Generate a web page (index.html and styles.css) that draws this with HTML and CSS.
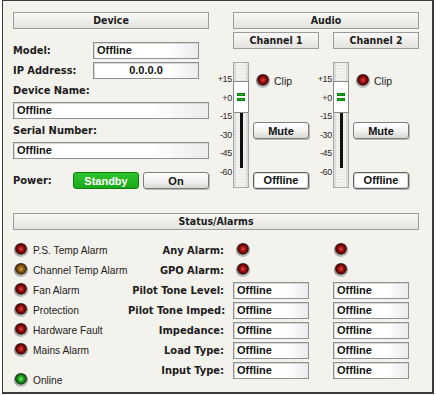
FILE: index.html
```html
<!DOCTYPE html>
<html lang="en">

<head>
    <meta charset="UTF-8">
    <title>Amplifier Status</title>
    <link rel="stylesheet" href="styles.css">
</head>

<body>
    <div class="frame">
        <div class="top">
            <section class="device">
                <div class="bar">Device</div>

                <div class="row first">
                    <span class="lbl">Model:</span>
                    <div class="field short">Offline</div>
                </div>
                <div class="row">
                    <span class="lbl">IP Address:</span>
                    <div class="field short center">0.0.0.0</div>
                </div>

                <div class="lbl line">Device Name:</div>
                <div class="field wide">Offline</div>

                <div class="lbl line">Serial Number:</div>
                <div class="field wide">Offline</div>

                <div class="row power">
                    <span class="lbl">Power:</span>
                    <button class="btn green">Standby</button>
                    <button class="btn">On</button>
                </div>
            </section>

            <section class="audio">
                <div class="bar">Audio</div>
                <div class="channel-heads">
                    <div class="bar">Channel 1</div>
                    <div class="bar">Channel 2</div>
                </div>

                <div class="strips">
                    <div class="strip">
                        <div class="scale">
                            <span>+15</span><span>+0</span><span>-15</span>
                            <span>-30</span><span>-45</span><span>-60</span>
                        </div>
                        <div class="track">
                            <div class="knob"><i></i><i></i></div>
                            <div class="wire"></div>
                        </div>
                        <div class="controls">
                            <div class="clip"><span class="led red"></span><span class="txt">Clip</span></div>
                            <button class="btn mute">Mute</button>
                            <div class="state">Offline</div>
                        </div>
                    </div>

                    <div class="strip">
                        <div class="scale">
                            <span>+15</span><span>+0</span><span>-15</span>
                            <span>-30</span><span>-45</span><span>-60</span>
                        </div>
                        <div class="track">
                            <div class="knob"><i></i><i></i></div>
                            <div class="wire"></div>
                        </div>
                        <div class="controls">
                            <div class="clip"><span class="led red"></span><span class="txt">Clip</span></div>
                            <button class="btn mute">Mute</button>
                            <div class="state">Offline</div>
                        </div>
                    </div>
                </div>
            </section>
        </div>

        <section class="status">
            <div class="bar">Status/Alarms</div>

            <div class="status-body">
                <ul class="alarms">
                    <li><span class="led red"></span><span class="txt">P.S. Temp Alarm</span></li>
                    <li><span class="led amber"></span><span class="txt">Channel Temp Alarm</span></li>
                    <li><span class="led red"></span><span class="txt">Fan Alarm</span></li>
                    <li><span class="led red"></span><span class="txt">Protection</span></li>
                    <li><span class="led red"></span><span class="txt">Hardware Fault</span></li>
                    <li><span class="led red"></span><span class="txt">Mains Alarm</span></li>
                    <li class="online"><span class="led green"></span><span class="txt">Online</span></li>
                </ul>

                <div class="grid">
                    <span class="lbl">Any Alarm:</span>
                    <span class="led red c1"></span>
                    <span class="led red c2"></span>

                    <span class="lbl">GPO Alarm:</span>
                    <span class="led red c1"></span>
                    <span class="led red c2"></span>

                    <span class="lbl">Pilot Tone Level:</span>
                    <div class="field">Offline</div>
                    <div class="field">Offline</div>

                    <span class="lbl">Pilot Tone Imped:</span>
                    <div class="field">Offline</div>
                    <div class="field">Offline</div>

                    <span class="lbl">Impedance:</span>
                    <div class="field">Offline</div>
                    <div class="field">Offline</div>

                    <span class="lbl">Load Type:</span>
                    <div class="field">Offline</div>
                    <div class="field">Offline</div>

                    <span class="lbl">Input Type:</span>
                    <div class="field">Offline</div>
                    <div class="field">Offline</div>
                </div>
            </div>
        </section>
    </div>
</body>

</html>
```

FILE: styles.css
```css
* {
    margin: 0;
    padding: 0;
    box-sizing: border-box;
}

body {
    background-color: #fff;
}

.frame {
    margin-left: 2px;
    width: 432px;
    height: 394px;
    border: 1px solid #3a3a3a;
    border-width: 1px 2px 2px 1px;
    background-color: #f4f2ec;
    padding: 11px 0 0 10px;
}

/* text styles */
.lbl {
    font-family: "DejaVu Sans Condensed", "DejaVu Sans", sans-serif;
    font-stretch: condensed;
    font-weight: bold;
    font-size: 11px;
    color: #1c1c1c;
}

.txt {
    font-family: "Liberation Sans", Arial, sans-serif;
    font-size: 10.2px;
    color: #222;
}

.bar {
    height: 17px;
    border: 1px solid #9c9c9a;
    background: linear-gradient(#f8f8f6, #e4e3de);
    text-align: center;
    font-family: "DejaVu Sans Condensed", "DejaVu Sans", sans-serif;
    font-stretch: condensed;
    font-weight: bold;
    font-size: 10.5px;
    line-height: 15px;
    color: #1c1c1c;
}

.field {
    height: 17px;
    border: 1px solid #909090;
    background: linear-gradient(90deg, #fff 70%, #ececec);
    box-shadow: inset 1px 1px 0 #d6d6d6;
    padding-left: 3px;
    font-family: "Liberation Sans", Arial, sans-serif;
    font-weight: bold;
    font-size: 11px;
    line-height: 15px;
    color: #111;
}

.field.center {
    text-align: center;
    padding-left: 0;
}

.btn {
    height: 17px;
    width: 66px;
    border: 1px solid #7d7d7d;
    border-radius: 3px;
    background: linear-gradient(#ffffff, #f1f1ef 55%, #d6d6d3);
    box-shadow: 1px 1px 0 #b5b5b2;
    font-family: "Liberation Sans", Arial, sans-serif;
    font-weight: bold;
    font-size: 11px;
    color: #111;
}

.btn.green {
    border-color: #0d7f0d;
    background: linear-gradient(#2fc42f, #1aa81a);
    color: #fff;
    box-shadow: none;
}

/* top half */
.top {
    display: flex;
    align-items: flex-start;
}

.device {
    width: 196px;
}

.row {
    display: flex;
    align-items: center;
    margin-top: 3px;
}

.row.first {
    margin-top: 13px;
}

.row .lbl {
    width: 80px;
}

.field.short {
    width: 106px;
}

.lbl.line {
    display: block;
    height: 17px;
    line-height: 17px;
    margin-top: 3px;
}

.field.wide {
    margin-top: 3px;
}

.row.power {
    margin-top: 13px;
    gap: 4px;
}

.row.power .lbl {
    width: 56px;
}

.audio {
    width: 203px;
    margin-left: 7px;
}

.audio > .bar {
    margin-left: 17px;
}

.channel-heads {
    display: grid;
    grid-template-columns: 86px 86px;
    column-gap: 14px;
    margin: 3px 0 0 17px;
}

.strips {
    display: flex;
    margin-top: 13px;
}

.strip {
    width: 100px;
    display: flex;
}

.scale {
    width: 17px;
    padding: 8px 1px 0 0;
    display: flex;
    flex-direction: column;
    align-items: flex-end;
    font-family: "Liberation Sans", Arial, sans-serif;
    font-size: 9px;
    letter-spacing: -0.3px;
    color: #2a2a2a;
}

.scale span {
    height: 18.6px;
    line-height: 18.6px;
}

.track {
    width: 16px;
    height: 126px;
    border: 1px solid #a8a8a6;
    background:
        repeating-linear-gradient(#f3f3f0 0 2px, #e6e6e2 2px 3px),
        #eeeeea;
    background-size: 8px 100%, auto;
    background-position: 3px 0, 0 0;
    background-repeat: no-repeat;
    box-shadow: inset 2px 0 0 #dcdcd8, inset -2px 0 0 #dcdcd8;
    padding-top: 18px;
}

.knob {
    height: 32px;
    margin: 0 -1px;
    border: 1px solid #8a8a8a;
    background: #fff;
    display: flex;
    flex-direction: column;
    align-items: center;
    justify-content: center;
    gap: 2px;
}

.knob i {
    display: block;
    width: 8px;
    height: 3px;
    background: #19b019;
    border: 1px solid #0d800d;
}

.wire {
    width: 3px;
    height: 55px;
    margin: 0 auto;
    background: #111;
}

.controls {
    width: 56px;
    margin-left: 4px;
    display: flex;
    flex-direction: column;
}

.clip {
    display: flex;
    align-items: center;
    gap: 4px;
    margin: 12px 0 0 3px;
    height: 14px;
}

.clip .txt {
    font-size: 10.5px;
}

.btn.mute {
    width: 56px;
    margin-top: 34px;
}

.state {
    margin-top: 33px;
    height: 17px;
    border: 1px solid #5e5e5e;
    border-radius: 3px;
    background: #fff;
    box-shadow: inset 0 0 0 1px #d9d9d9, 1px 1px 0 #b8b8b5;
    text-align: center;
    font-family: "Liberation Sans", Arial, sans-serif;
    font-weight: bold;
    font-size: 11px;
    line-height: 15px;
    color: #111;
}

/* LEDs */
.led {
    --hi: #dc4a4a;
    --mid: #a01212;
    --lo: #520303;
    display: inline-block;
    flex: 0 0 auto;
    width: 14px;
    height: 14px;
    border-radius: 50%;
    background:
        radial-gradient(circle at 50% 42%, var(--hi) 0, var(--mid) 2.5px, var(--lo) 5px, rgba(20, 20, 20, 0.7) 5.5px, transparent 6px),
        linear-gradient(165deg, #575757, #9a9a9a 55%, #cfcfcc);
}

.led.amber {
    --hi: #d6a24c;
    --mid: #966219;
    --lo: #4e3206;
}

.led.green {
    --hi: #7cef7c;
    --mid: #24ab24;
    --lo: #0a540a;
}

/* status */
.status {
    margin-top: 24px;
    width: 406px;
}

.status-body {
    display: flex;
    margin-top: 10px;
}

.alarms {
    list-style: none;
    width: 115px;
}

.alarms li {
    height: 20px;
    display: flex;
    align-items: center;
    gap: 5px;
    padding-left: 1px;
}

.alarms li.online {
    margin-top: 10px;
}

.grid {
    display: grid;
    grid-template-columns: 105px 100px 76px;
    grid-auto-rows: 20px;
    align-items: center;
}

.grid .lbl {
    text-align: right;
    padding-right: 9px;
    white-space: nowrap;
}

.grid .led.c1 {
    margin-left: 3px;
}

.grid .led.c2 {
    margin-left: 1px;
}

.grid .field {
    width: 76px;
}
```
